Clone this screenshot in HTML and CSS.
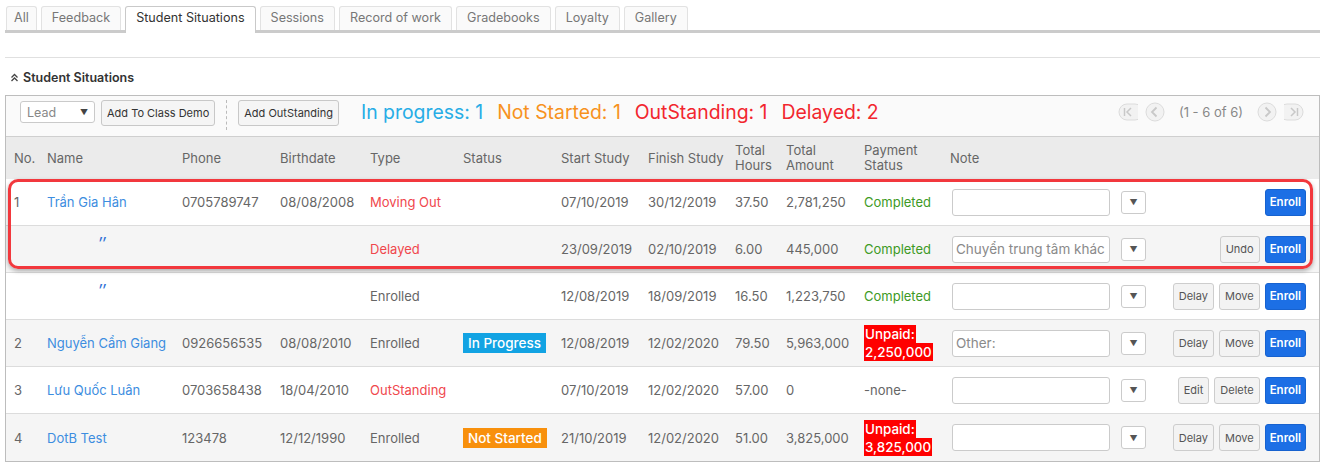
FILE: index.html
```html
<!DOCTYPE html>
<html>
<head>
<meta charset="utf-8">
<link rel="stylesheet" href="styles.css">
</head>
<body>
<div class="page">
  <ul class="tabs">
    <li class="tab tab-all">All</li>
    <li class="tab">Feedback</li>
    <li class="tab active">Student Situations</li>
    <li class="tab">Sessions</li>
    <li class="tab">Record of work</li>
    <li class="tab">Gradebooks</li>
    <li class="tab">Loyalty</li>
    <li class="tab">Gallery</li>
  </ul>
  <div class="sep"></div>
  <h3 class="sec-title">
    <svg class="chev" width="9" height="9" viewBox="0 0 9 9"><polyline points="1.5,4.5 4.5,1.5 7.5,4.5" fill="none" stroke="#444" stroke-width="1.3"/><polyline points="1.5,8 4.5,5 7.5,8" fill="none" stroke="#444" stroke-width="1.3"/></svg>
    Student Situations
  </h3>
  <div class="panel">
    <div class="toolbar">
      <div class="lead-select"><span>Lead</span><span class="arr">▼</span></div>
      <button class="tbtn">Add To Class Demo</button>
      <div class="vsep"></div>
      <button class="tbtn">Add OutStanding</button>
      <div class="counts">
        <span class="c-prog">In progress: 1</span>
        <span class="c-ns">Not Started: 1</span>
        <span class="c-out">OutStanding: 1</span>
        <span class="c-del">Delayed: 2</span>
      </div>
      <div class="pager">
        <svg width="20" height="18" viewBox="0 0 20 18"><path d="M9 1 H17 A8 8 0 0 1 17 17 H9 A8 8 0 0 1 9 1 Z" fill="#f2f2f2" stroke="#dcdcdc"/><line x1="6.5" y1="5" x2="6.5" y2="13" stroke="#c8c8c8" stroke-width="1.5"/><polyline points="13,5 9,9 13,13" fill="none" stroke="#c8c8c8" stroke-width="1.5"/></svg>
        <svg width="20" height="20" viewBox="0 0 20 20"><circle cx="10" cy="10" r="9" fill="#f2f2f2" stroke="#dcdcdc"/><polyline points="11.5,5.5 7,10 11.5,14.5" fill="none" stroke="#c8c8c8" stroke-width="1.8"/></svg>
        <span class="pg-text">(1 - 6 of 6)</span>
        <svg width="20" height="20" viewBox="0 0 20 20"><circle cx="10" cy="10" r="9" fill="#f2f2f2" stroke="#dcdcdc"/><polyline points="8.5,5.5 13,10 8.5,14.5" fill="none" stroke="#c8c8c8" stroke-width="1.8"/></svg>
        <svg width="20" height="18" viewBox="0 0 20 18"><path d="M3 1 H11 A8 8 0 0 1 11 17 H3 A8 8 0 0 1 3 1 Z" fill="#f2f2f2" stroke="#dcdcdc"/><polyline points="7,5 11,9 7,13" fill="none" stroke="#c8c8c8" stroke-width="1.5"/><line x1="13.5" y1="5" x2="13.5" y2="13" stroke="#c8c8c8" stroke-width="1.5"/></svg>
      </div>
    </div>
    <table class="grid">
      <colgroup>
        <col class="w-no"><col class="w-name"><col class="w-phone"><col class="w-birth"><col class="w-type"><col class="w-status"><col class="w-start"><col class="w-finish"><col class="w-hours"><col class="w-amount"><col class="w-pay"><col class="w-note"><col class="w-sel"><col class="w-act">
      </colgroup>
      <thead>
        <tr>
          <th>No.</th><th>Name</th><th>Phone</th><th>Birthdate</th><th>Type</th><th>Status</th><th>Start Study</th><th>Finish Study</th><th>Total<br>Hours</th><th>Total<br>Amount</th><th>Payment<br>Status</th><th>Note</th><th></th><th></th>
        </tr>
      </thead>
      <tbody>
        <tr>
          <td>1</td><td><span class="link">Trần Gia Hân</span></td><td>0705789747</td><td>08/08/2008</td><td class="red">Moving Out</td><td></td><td>07/10/2019</td><td>30/12/2019</td><td>37.50</td><td>2,781,250</td><td class="green">Completed</td>
          <td class="note"><input class="note-in" type="text"></td><td class="selc"><span class="dd">▼</span></td>
          <td class="act"><button class="btn blue">Enroll</button></td>
        </tr>
        <tr>
          <td></td><td><span class="ditto">″</span></td><td></td><td></td><td class="red">Delayed</td><td></td><td>23/09/2019</td><td>02/10/2019</td><td>6.00</td><td>445,000</td><td class="green">Completed</td>
          <td class="note"><input class="note-in" type="text" placeholder="Chuyển trung tâm khác"></td><td class="selc"><span class="dd">▼</span></td>
          <td class="act"><button class="btn">Undo</button><button class="btn blue">Enroll</button></td>
        </tr>
        <tr>
          <td></td><td><span class="ditto">″</span></td><td></td><td></td><td>Enrolled</td><td></td><td>12/08/2019</td><td>18/09/2019</td><td>16.50</td><td>1,223,750</td><td class="green">Completed</td>
          <td class="note"><input class="note-in" type="text"></td><td class="selc"><span class="dd">▼</span></td>
          <td class="act"><button class="btn">Delay</button><button class="btn">Move</button><button class="btn blue">Enroll</button></td>
        </tr>
        <tr>
          <td>2</td><td><span class="link">Nguyễn Cẩm Giang</span></td><td>0926656535</td><td>08/08/2010</td><td>Enrolled</td><td><span class="badge b-prog">In Progress</span></td><td>12/08/2019</td><td>12/02/2020</td><td>79.50</td><td>5,963,000</td><td><span class="unpaid">Unpaid: 2,250,000</span></td>
          <td class="note"><input class="note-in" type="text" placeholder="Other:"></td><td class="selc"><span class="dd">▼</span></td>
          <td class="act"><button class="btn">Delay</button><button class="btn">Move</button><button class="btn blue">Enroll</button></td>
        </tr>
        <tr>
          <td>3</td><td><span class="link">Lưu Quốc Luân</span></td><td>0703658438</td><td>18/04/2010</td><td class="red">OutStanding</td><td></td><td>07/10/2019</td><td>12/02/2020</td><td>57.00</td><td>0</td><td>-none-</td>
          <td class="note"><input class="note-in" type="text"></td><td class="selc"><span class="dd">▼</span></td>
          <td class="act"><button class="btn">Edit</button><button class="btn">Delete</button><button class="btn blue">Enroll</button></td>
        </tr>
        <tr>
          <td>4</td><td><span class="link">DotB Test</span></td><td>123478</td><td>12/12/1990</td><td>Enrolled</td><td><span class="badge b-ns">Not Started</span></td><td>21/10/2019</td><td>12/02/2020</td><td>51.00</td><td>3,825,000</td><td><span class="unpaid">Unpaid: 3,825,000</span></td>
          <td class="note"><input class="note-in" type="text"></td><td class="selc"><span class="dd">▼</span></td>
          <td class="act"><button class="btn">Delay</button><button class="btn">Move</button><button class="btn blue">Enroll</button></td>
        </tr>
      </tbody>
    </table>
    <div class="highlight"></div>
  </div>
</div>
</body>
</html>
```

FILE: styles.css
```css
* { box-sizing: border-box; }
html, body { margin: 0; padding: 0; background: #fff; }
body { font-family: Inter, "Noto Sans", "Liberation Sans", sans-serif; font-size: 13px; color: #666; }
.page { padding: 6px 5px 0 5px; width: 1325px; }

.tabs { list-style: none; margin: 0; padding: 0 0 0 1px; display: flex; gap: 4px; border-bottom: 3px solid #cbcbcb; height: 27px; }
.tab { height: 24px; line-height: 22px; padding: 0 10px; border: 1px solid #e2e2e2; border-bottom: none; border-radius: 3px 3px 0 0; background: #fafafa; color: #777; font-size: 12.6px; }
.tab-all { padding: 0 7px; }
.tab.active { background: #fff; color: #333; border-color: #c9c9c9; height: 27px; }

.sep { height: 1px; background: #e0e0e0; margin-top: 24px; }
.sec-title { margin: 0; height: 37px; display: flex; align-items: center; gap: 4px; padding-left: 5px; padding-top: 1px; font-size: 12.5px; font-weight: 600; color: #333; }
.chev { display: block; }

.panel { position: relative; border: 1px solid #bdbdbd; width: 1315px; }
.toolbar { height: 41px; background: #fafafa; border-bottom: 1px solid #cfcfcf; display: flex; align-items: flex-start; padding: 4px 14px 0 14px; }
.lead-select { width: 75px; height: 22px; margin-top: 1px; border: 1px solid #cacaca; border-radius: 3px; background: #fff; display: flex; align-items: center; justify-content: space-between; padding: 0 6px 0 6px; color: #888; font-size: 12.5px; margin-right: 6px; }
.lead-select .arr { font-size: 8px; color: #444; }
.tbtn { height: 26px; padding: 0 5px; border: 1px solid #c8c8c8; border-radius: 3px; background: #f5f5f5; color: #333; font-family: inherit; font-size: 11px; }
.vsep { width: 0; height: 30px; border-left: 1px dashed #bbb; margin: 0 11px 0 11px; }
.counts { margin-left: 22px; display: flex; gap: 14px; font-size: 19.4px; line-height: 24px; height: 24px; }
.c-prog { color: #27ade6; }
.c-ns { color: #f7921e; }
.c-out, .c-del { color: #f2262e; }
.pager { margin-left: auto; display: flex; align-items: center; gap: 7px; padding-right: 1px; height: 24px; }
.pg-text { color: #888; font-size: 13px; margin: 0 7px; }

.grid { width: 1313px; table-layout: fixed; border-collapse: separate; border-spacing: 0; }
.w-no { width: 33px; } .w-name { width: 135px; } .w-phone { width: 98px; } .w-birth { width: 90px; }
.w-type { width: 93px; } .w-status { width: 98px; } .w-start { width: 87px; } .w-finish { width: 87px; }
.w-hours { width: 51px; } .w-amount { width: 78px; } .w-pay { width: 86px; } .w-note { width: 173px; }
.w-sel { width: 45px; } .w-act { width: 159px; }

.grid th { height: 42px; background: #ebebeb; text-align: left; font-weight: 400; color: #666; padding: 0 8px; font-size: 13px; line-height: 15px; white-space: nowrap; }
.grid td { height: 47px; padding: 0 8px; border-bottom: 1px solid #dcdcdc; white-space: nowrap; color: #666; }
.grid tbody tr:nth-child(even) td { background: #f5f5f5; }
.grid tbody tr:last-child td { border-bottom: none; }

.link { color: #3d8de0; }
.grid td.red { color: #f0474d; }
.grid td.green { color: #3d9a25; }
.ditto { display: inline-block; padding-left: 51px; color: #2f6fd6; font-size: 17px; font-style: italic; position: relative; top: -5px; }

.badge { display: inline-block; color: #fff; font-size: 13.5px; font-weight: 500; padding: 0 5px; height: 20px; line-height: 20px; }
.b-prog { background: #12a3e3; }
.b-ns { background: #f8900c; }

.grid td:has(.unpaid) { white-space: normal; }
.unpaid { background: #ff0000; color: #fff; font-size: 13.4px; font-weight: 500; line-height: 18px; padding: 1px 1px 1px 1px; -webkit-box-decoration-break: clone; box-decoration-break: clone; }

.grid td.note { padding: 0 0 0 10px; }
.note-in { width: 158px; height: 27px; border: 1px solid #cbcbcb; border-radius: 3px; background: #fff; padding: 0 3px; font-family: inherit; font-size: 13.5px; color: #666; display: block; }
.note-in::placeholder { color: #8a8a8a; }
.grid td.selc { padding: 0 0 0 6px; }
.dd { display: flex; width: 25px; height: 23px; border: 1px solid #cbcbcb; border-radius: 3px; background: #fff; align-items: center; justify-content: center; font-size: 8px; color: #555; }
.grid td.act { text-align: right; padding: 0 13px 0 0; }
.btn { height: 27px; padding: 0 5px; margin-left: 5px; border: 1px solid #cdcdcd; border-radius: 3px; background: #f3f3f3; color: #555; font-family: inherit; font-size: 11px; vertical-align: middle; }
.btn.blue { background: #1c6fe5; border-color: #1762cf; color: #fff; font-weight: 600; font-size: 11.5px; padding: 0 4px; }

.highlight { position: absolute; left: 2px; top: 83px; width: 1305px; height: 90px; border: 3px solid #f2383d; border-radius: 10px; box-shadow: 0 2px 4px rgba(0,0,0,0.3); pointer-events: none; }
```
